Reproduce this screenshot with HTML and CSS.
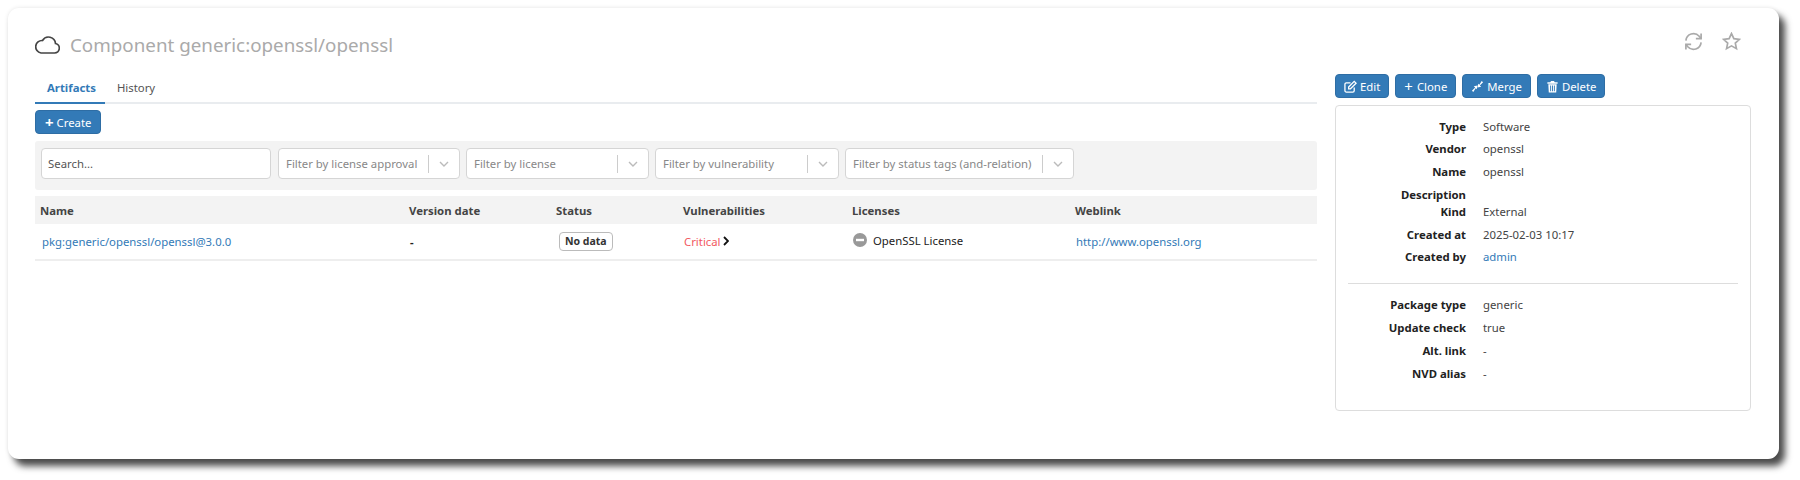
FILE: index.html
```html
<!DOCTYPE html>
<html lang="en">
<head>
<meta charset="utf-8">
<title>Component generic:openssl/openssl</title>
<link rel="stylesheet" href="styles.css">
</head>
<body>
<main class="card">
  <header class="page-head">
    <h1 class="title">
      <svg class="cloud" viewBox="0 0 25 18"><path d="M6 17h13.500a4.800 4.800 0 0 0 1-9.500A7 7 0 0 0 7.500 4.500 6.300 6.300 0 0 0 6 17z"/></svg>
      <span>Component generic:openssl/openssl</span>
    </h1>
    <div class="head-actions">
      <svg class="head-icon" viewBox="0 0 20 20"><path d="M2 9a8 8 0 0 1 14-4.500L18 7M18 11a8 8 0 0 1-14 4.500L2 13"/><path d="M18 1.500V7h-5.500M2 18.500V13h5.500"/></svg>
      <svg class="head-icon star" viewBox="0 0 20 20"><path d="M10 1.600l2.500 5.400 5.900.7-4.400 4 1.200 5.800-5.200-2.900-5.200 2.900L6 11.700l-4.400-4 5.900-.7z"/></svg>
    </div>
  </header>
  <div class="columns">
    <section class="left">
      <nav class="tabs">
        <a class="tab active">Artifacts</a>
        <a class="tab">History</a>
      </nav>
      <button class="btn create"><span class="plus">+</span>Create</button>
      <div class="filters">
        <input class="search" placeholder="Search...">
        <div class="select s1"><span class="ph">Filter by license approval</span><span class="sep"></span><svg class="chev" viewBox="0 0 10 6"><path d="M1 1l4 4 4-4"/></svg></div>
        <div class="select s2"><span class="ph">Filter by license</span><span class="sep"></span><svg class="chev" viewBox="0 0 10 6"><path d="M1 1l4 4 4-4"/></svg></div>
        <div class="select s3"><span class="ph">Filter by vulnerability</span><span class="sep"></span><svg class="chev" viewBox="0 0 10 6"><path d="M1 1l4 4 4-4"/></svg></div>
        <div class="select s4"><span class="ph">Filter by status tags (and-relation)</span><span class="sep"></span><svg class="chev" viewBox="0 0 10 6"><path d="M1 1l4 4 4-4"/></svg></div>
      </div>
      <table class="table">
        <colgroup><col class="c1"><col class="c2"><col class="c3"><col class="c4"><col class="c5"><col></colgroup>
        <thead>
          <tr><th>Name</th><th>Version date</th><th>Status</th><th>Vulnerabilities</th><th>Licenses</th><th>Weblink</th></tr>
        </thead>
        <tbody>
          <tr>
            <td><a class="link">pkg:generic/openssl/openssl@3.0.0</a></td>
            <td class="dash">-</td>
            <td><span class="badge">No data</span></td>
            <td class="vuln"><span class="critical">Critical</span><svg class="arrow" viewBox="0 0 6 10"><path d="M1 1l4 4-4 4"/></svg></td>
            <td><span class="license"><svg class="minus" viewBox="0 0 14 14"><circle cx="7" cy="7" r="7"/><rect x="3" y="5.800" width="8" height="2.400"/></svg>OpenSSL License</span></td>
            <td><a class="link web">http://www.openssl.org</a></td>
          </tr>
        </tbody>
      </table>
    </section>
    <aside class="right">
      <div class="actions">
        <button class="btn"><svg class="bi stroke" viewBox="0 0 14 14"><path d="M11 8v3.500a1.500 1.500 0 0 1-1.500 1.500h-7A1.500 1.500 0 0 1 1 11.500v-7A1.500 1.500 0 0 1 2.500 3H7"/><path d="M5 7.500L11 1.500l2 2-6 6H5z"/></svg>Edit</button>
        <button class="btn"><span class="plus wide">+</span>Clone</button>
        <button class="btn"><svg class="bi" viewBox="0 0 14 14"><path d="M1 11.500l3.500-3.500L3 6.800l4-.8-.8 4L5 8.800 2.500 13zM13 2.500L9.500 6 11 7.200l-4 .8.800-4L9 5.200 11.500 1z"/></svg>Merge</button>
        <button class="btn"><svg class="bi" viewBox="0 0 14 14"><path d="M1.500 2.500h3l1-1.500h3l1 1.500h3V4h-11zM2.500 4.500h9l-.5 9H3zM4.500 6v6h1V6zm2 0v6h1V6zm2 0v6h1V6z" fill-rule="evenodd"/></svg>Delete</button>
      </div>
      <div class="panel">
        <dl class="facts">
          <dt>Type</dt><dd>Software</dd>
          <dt>Vendor</dt><dd>openssl</dd>
          <dt>Name</dt><dd>openssl</dd>
          <dt class="tight">Description</dt><dd class="tight"></dd>
          <dt>Kind</dt><dd>External</dd>
          <dt>Created at</dt><dd>2025-02-03 10:17</dd>
          <dt>Created by</dt><dd><a class="link">admin</a></dd>
        </dl>
        <hr class="rule">
        <dl class="facts">
          <dt>Package type</dt><dd>generic</dd>
          <dt>Update check</dt><dd>true</dd>
          <dt>Alt. link</dt><dd>-</dd>
          <dt>NVD alias</dt><dd>-</dd>
        </dl>
      </div>
    </aside>
  </div>
</main>
</body>
</html>
```
FILE: styles.css
```css
* { box-sizing: border-box; }
html, body { margin: 0; padding: 0; background: #fff; }
body {
  width: 1800px;
  height: 480px;
  overflow: hidden;
  padding: 8px 21px 0 8px;
  font-family: "Noto Sans", "Open Sans", sans-serif;
  font-size: 11.35px;
  color: #333;
}
.card {
  height: 451px;
  background: #fff;
  border-radius: 11px;
  box-shadow: 6px 7px 7px #4a4a4a, 0 0 4px rgba(0, 0, 0, .1);
  padding: 0 27px;
}
.page-head {
  height: 66px;
  display: flex;
  align-items: flex-start;
  justify-content: space-between;
  padding-top: 23px;
}
.title {
  margin: 0;
  display: flex;
  align-items: center;
  gap: 10px;
  font-size: 18.8px;
  line-height: 28px;
  font-weight: 400;
  color: #aaa;
}
.cloud { width: 25px; height: 18px; fill: none; stroke: #444; stroke-width: 1.7; }
.head-actions { display: flex; gap: 19px; padding: 1px 11px 0 0; }
.head-icon { width: 19px; height: 19px; fill: none; stroke: #aaa; stroke-width: 1.8; }
.columns { display: flex; gap: 18px; align-items: flex-start; }
.left { width: 1282px; }
.right { width: 416px; }
.tabs {
  display: flex;
  height: 30px;
  border-bottom: 2px solid #e9ecef;
}
.tab {
  height: 30px;
  line-height: 28px;
  padding: 0 11px 0 12px;
  color: #555;
}
.tab.active {
  padding-right: 9px;
  color: #337ab7;
  font-weight: 700;
  border-bottom: 2px solid #337ab7;
}
.btn {
  border: 1px solid #2e6da4;
  background: #337ab7;
  color: #fff;
  border-radius: 4px;
  font: inherit;
  padding: 0 8px;
  display: inline-flex;
  align-items: center;
  height: 24px;
}
.create { margin-top: 6px; display: flex; padding: 0 9px; }
.plus { font-size: 15px; font-weight: 700; line-height: 1; margin-right: 3px; }
.plus.wide { font-weight: 400; margin-right: 4px; }
.filters {
  margin-top: 7px;
  height: 49px;
  background: #f3f3f3;
  border-radius: 3px;
  display: flex;
  gap: 6px;
  padding: 7px 6px;
}
.search, .select {
  height: 31px;
  background: #fff;
  border: 1px solid #d5d5d5;
  border-radius: 4px;
  font: inherit;
}
.search { width: 230px; margin-right: 1px; padding: 0 6px; color: #555; outline: none; }
.search::placeholder { color: #555; opacity: 1; }
.select { display: flex; align-items: center; padding-left: 7px; color: #888; }
.s1 { width: 182px; }
.s2 { width: 183px; }
.s3 { width: 184px; }
.s4 { width: 229px; }
.ph { flex: 1; white-space: nowrap; }
.sep { width: 1px; height: 18px; background: #ccc; }
.chev { width: 10px; height: 6px; margin: 0 10px; fill: none; stroke: #bbb; stroke-width: 1.4; }
.table {
  margin-top: 6px;
  width: 100%;
  table-layout: fixed;
  border-collapse: collapse;
}
.c1 { width: 368px; }
.c2 { width: 147px; }
.c3 { width: 127px; }
.c4 { width: 169px; }
.c5 { width: 223px; }
.table th {
  height: 28px;
  background: #f3f3f3;
  padding: 0 6px;
  text-align: left;
  font-weight: 700;
  color: #444;
}
.table th:first-child { padding-left: 5px; }
.table td {
  height: 36px;
  padding: 0 7px;
  border-bottom: 2px solid #eee;
  color: #222;
}
.link { color: #337ab7; }
.dash { font-weight: 700; }
.badge {
  display: inline-block;
  margin-left: 2px;
  padding: 0 5px;
  height: 19px;
  line-height: 17px;
  font-size: 10.5px;
  font-weight: 700;
  border: 1px solid #bbb;
  border-radius: 4px;
  color: #333;
}
.vuln { white-space: nowrap; }
.critical { color: #f25a5f; }
.arrow { width: 6px; height: 10px; margin-left: 2px; fill: none; stroke: #111; stroke-width: 1.8; }
.license { display: inline-flex; align-items: center; gap: 6px; color: #222; }
.minus { width: 14px; height: 14px; fill: #999; }
.minus rect { fill: #fff; }
.actions { display: flex; gap: 6px; margin-bottom: 7px; height: 24px; }
.bi { width: 13px; height: 13px; margin-right: 3px; fill: #fff; }
.bi.stroke { fill: none; stroke: #fff; stroke-width: 1.4; }
.panel {
  height: 306px;
  border: 1px solid #ddd;
  border-radius: 4px;
  padding: 9.5px 12px 0;
}
.facts {
  margin: 0;
  display: grid;
  grid-template-columns: 118px 1fr;
  column-gap: 17px;
}
.facts dt, .facts dd {
  margin: 0;
  height: 22.8px;
  line-height: 22.8px;
}
.facts dt { text-align: right; font-weight: 700; color: #222; }
.facts dd { color: #444; }
.facts dt.tight, .facts dd.tight { height: 17px; line-height: 22px; }
.rule { border: 0; border-top: 1px solid #ddd; margin: 14px 0 10px; }
```
